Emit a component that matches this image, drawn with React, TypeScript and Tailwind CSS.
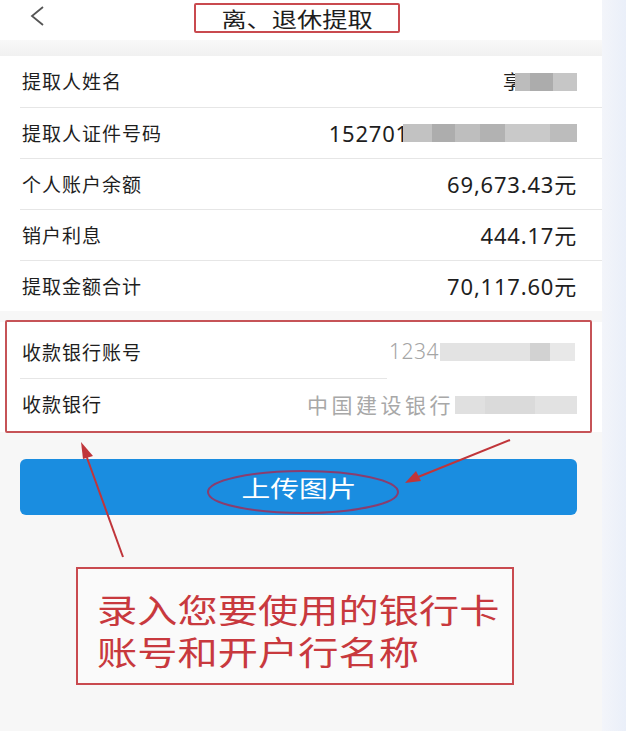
import React from 'react';

const font = { fontFamily: '"Noto Sans CJK SC", "Noto Sans", sans-serif' };
const numFont = { fontFamily: '"Noto Sans", "Noto Sans CJK SC", sans-serif' };

type Row = { label: string; value: React.ReactNode };

const Blur = ({ parts, h = 18 }: { parts: [number, string][]; h?: number }) => (
  <div className="relative z-10 flex" style={{ height: h }}>
    {parts.map(([w, c], i) => (
      <div key={i} style={{ width: w, background: c }} />
    ))}
  </div>
);

const Money = ({ v }: { v: string }) => (
  <span className="text-[22px] tracking-[0.8px] text-[#1e1e1e]" style={numFont}>
    {v}
  </span>
);

const rows: Row[] = [
  {
    label: '提取人姓名',
    value: (
      <div className="flex items-center">
        <span className="text-[19px] text-[#1e1e1e] mr-[-7px]">享</span>
        <Blur parts={[[15, '#bcbcbc'], [23, '#acacac'], [24, '#c6c6c6']]} />
      </div>
    ),
  },
  {
    label: '提取人证件号码',
    value: (
      <div className="flex items-center">
        <span className="text-[22px] tracking-[0.8px] text-[#1e1e1e] mr-[-6px]" style={numFont}>
          152701
        </span>
        <Blur
          parts={[
            [29, '#c2c2c2'],
            [23, '#adadad'],
            [25, '#bebebe'],
            [25, '#b2b2b2'],
            [45, '#c9c9c9'],
            [27, '#bcbcbc'],
          ]}
        />
      </div>
    ),
  },
  { label: '个人账户余额', value: <Money v="69,673.43元" /> },
  { label: '销户利息', value: <Money v="444.17元" /> },
  { label: '提取金额合计', value: <Money v="70,117.60元" /> },
];

export default function App() {
  return (
    <div className="relative flex w-[626px] h-[731px] overflow-hidden bg-[#f7f7f7]" style={font}>
      <div className="w-[602px] flex flex-col bg-[#f7f7f7]">
        {/* header */}
        <div className="relative h-[40px] bg-white flex items-center justify-center">
          <svg className="absolute left-[28px] top-[5px]" width="18" height="22" viewBox="0 0 18 22">
            <polyline points="15,2 4,11 15,20" fill="none" stroke="#555" strokeWidth="1.8" />
          </svg>
          <div className="mt-[-4px] ml-[-8px] w-[206px] h-[30px] border-2 border-[#c94a4f] rounded-[2px] flex items-center justify-center">
            <span className="inline-block text-[21px] scale-x-[1.2] text-[#1e1e1e] leading-none">离、退休提取</span>
          </div>
        </div>
        <div className="h-[16px] bg-gradient-to-b from-[#f9f9f9] to-[#f1f1f1]" />

        {/* info list */}
        <div className="bg-white">
          {rows.map((r, i) => (
            <div key={r.label}>
              {i > 0 && <div className="ml-[20px] h-px bg-[#e6e6e6]" />}
              <div className={`flex items-center justify-between pl-[22px] pr-[25px] ${i > 0 ? 'h-[50px]' : 'h-[51px]'}`}>
                <span className="text-[19px] tracking-[1px] text-[#1e1e1e]">{r.label}</span>
                {r.value}
              </div>
            </div>
          ))}
        </div>

        <div className="h-[11px]" />

        {/* bank section */}
        <div className="relative bg-white pt-[4px] pb-[2px]">
          <div className="flex items-center justify-between h-[52px] pl-[22px] pr-[27px]">
            <span className="text-[19px] tracking-[1px] text-[#1e1e1e]">收款银行账号</span>
            <div className="flex items-center">
              <span className="text-[21px] font-light tracking-[0.5px] text-[#a5a5a5] mr-[1px]" style={numFont}>
                1234
              </span>
              <Blur parts={[[90, '#e3e3e3'], [20, '#d2d2d2'], [25, '#e8e8e8']]} />
            </div>
          </div>
          <div className="ml-[20px] mr-[215px] h-px bg-[#e6e6e6]" />
          <div className="flex items-center justify-between h-[51px] pl-[22px] pr-[25px]">
            <span className="text-[19px] tracking-[1px] text-[#1e1e1e]">收款银行</span>
            <div className="flex items-center">
              <span className="text-[21px] tracking-[3.5px] text-[#a8a8a8] mr-[1px]">中国建设银行</span>
              <Blur parts={[[30, '#e0e0e0'], [50, '#dadada'], [42, '#e2e2e2']]} />
            </div>
          </div>
          <div className="absolute left-[5px] top-[-2px] w-[587px] h-[113px] border-2 border-[#c65357] rounded-[2px]" />
        </div>

        {/* button */}
        <div className="pl-[20px] pr-[25px] mt-[27px]">
          <div className="relative h-[56px] rounded-[6px] bg-[#1a8de0] flex items-center justify-center">
            <span className="inline-block text-[23px] scale-x-[1.25] text-white">上传图片</span>
            <svg className="absolute left-[185px] top-[10px]" width="196" height="46" viewBox="0 0 196 46">
              <ellipse cx="98" cy="23" rx="95" ry="21" fill="none" stroke="#8a3d6e" strokeWidth="2" />
            </svg>
          </div>
        </div>

        {/* callout */}
        <div className="ml-[76px] mt-[52px] w-[438px] h-[118px] border-2 border-[#c94a4f] bg-white/40 pl-[19px] pt-[19px] flex flex-col">
          {['录入您要使用的银行卡', '账号和开户行名称'].map(t => (
            <div key={t} className="h-[42px] flex items-center">
              <span className="inline-block origin-left scale-x-[1.22] text-[33px] leading-none text-[#c8393e] whitespace-nowrap">
                {t}
              </span>
            </div>
          ))}
        </div>
      </div>

      {/* right strip */}
      <div className="flex-1 bg-gradient-to-r from-[#f3f5fa] to-[#eaeff9]" />

      {/* arrows */}
      <svg className="absolute left-0 top-0 pointer-events-none" width="626" height="731">
        <line x1="123" y1="557" x2="86" y2="455" stroke="#c0353a" strokeWidth="2" />
        <polygon points="81,442 93,456 83,459" fill="#c0353a" />
        <line x1="510" y1="440" x2="418" y2="477" stroke="#c0353a" strokeWidth="2" />
        <polygon points="405,483 416,471 421,481" fill="#c0353a" />
      </svg>
    </div>
  );
}
